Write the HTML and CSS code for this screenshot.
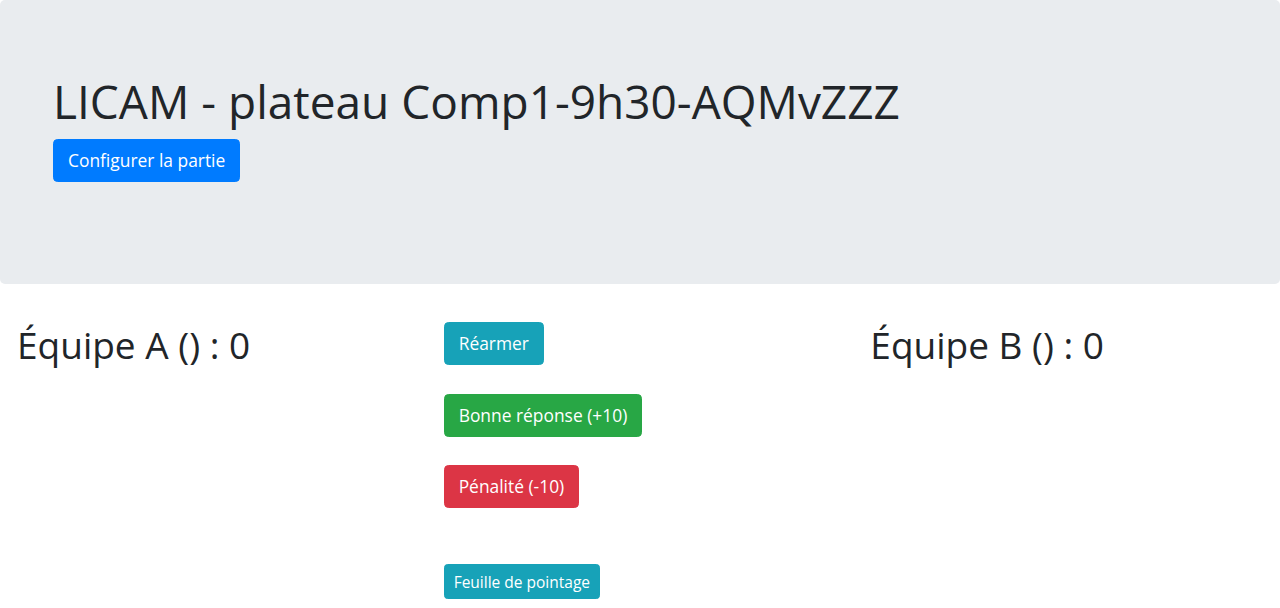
FILE: index.html
```html
<!DOCTYPE html>
<html lang="fr">
<head>
<meta charset="utf-8">
<title>LICAM - plateau</title>
<link rel="stylesheet" href="styles.css">
</head>
<body>
<div class="jumbotron">
  <div class="container-fluid">
    <h1 class="title">LICAM - plateau Comp1-9h30-AQMvZZZ</h1>
    <button class="btn btn-primary">Configurer la partie</button>
  </div>
</div>
<div class="row">
  <div class="col">
    <h2 class="team">Équipe A () : 0</h2>
  </div>
  <div class="col col-mid">
    <div class="actions">
      <button class="btn btn-info">Réarmer</button>
      <button class="btn btn-success">Bonne réponse (+10)</button>
      <button class="btn btn-danger">Pénalité (-10)</button>
    </div>
    <button class="btn btn-info btn-sm sheet">Feuille de pointage</button>
  </div>
  <div class="col">
    <h2 class="team">Équipe B () : 0</h2>
  </div>
</div>
</body>
</html>
```
FILE: styles.css
```css
* { box-sizing: border-box; }
html, body { margin: 0; padding: 0; }
body {
  font-family: "Open Sans", "Noto Sans", sans-serif;
  font-size: 18px;
  line-height: 1.5;
  color: #212529;
  background: #fff;
}
.jumbotron {
  background: #e9ecef;
  border-radius: 5px;
  padding: 74px 36px 102px;
  margin-bottom: 36px;
}
.container-fluid { padding: 0 17px; }
.title {
  font-size: 46px;
  font-weight: 500;
  line-height: 55px;
  margin: 0 0 10px;
}
.btn {
  display: inline-block;
  font-family: inherit;
  font-size: 17.4px;
  line-height: 27px;
  padding: 7px 14px;
  border: 1px solid transparent;
  border-radius: 4.5px;
  color: #fff;
  cursor: pointer;
  align-self: flex-start;
}
.btn-primary { background: #007bff; border-color: #007bff; }
.btn-info { background: #17a2b8; border-color: #17a2b8; }
.btn-success { background: #28a745; border-color: #28a745; }
.btn-danger { background: #dc3545; border-color: #dc3545; }
.btn-sm {
  font-size: 15.5px;
  line-height: 24px;
  padding: 4.5px 9px;
  border-radius: 3.6px;
}
.row {
  display: grid;
  grid-template-columns: 1fr 1fr 1fr;
}
.col { padding: 0 17px; }
.team {
  font-size: 37px;
  font-weight: 500;
  line-height: 44px;
  margin: 3px 0 9px;
}
.col-mid {
  display: flex;
  flex-direction: column;
  padding-top: 2px;
}
.actions {
  display: flex;
  flex-direction: column;
  gap: 28.5px;
}
.sheet { margin-top: 56px; }
```
